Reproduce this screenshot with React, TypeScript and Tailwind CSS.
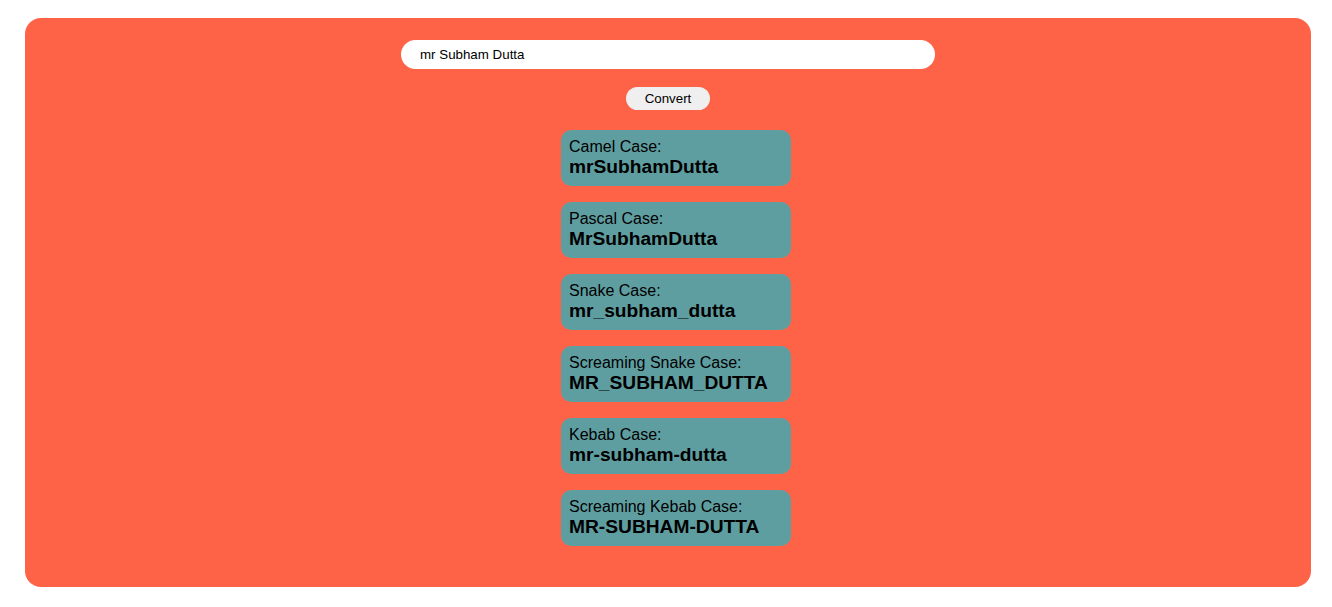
import { useState } from "react";

const words = (s: string) => s.trim().split(/\s+/).filter(Boolean);
const cap = (w: string) => w.charAt(0).toUpperCase() + w.slice(1).toLowerCase();

function convert(input: string) {
  const w = words(input);
  const lower = w.map((x) => x.toLowerCase());
  return [
    { label: "Camel Case:", value: lower[0] + w.slice(1).map(cap).join("") },
    { label: "Pascal Case:", value: w.map(cap).join("") },
    { label: "Snake Case:", value: lower.join("_") },
    { label: "Screaming Snake Case:", value: lower.join("_").toUpperCase() },
    { label: "Kebab Case:", value: lower.join("-") },
    { label: "Screaming Kebab Case:", value: lower.join("-").toUpperCase() },
  ];
}

export default function App() {
  const [text, setText] = useState("mr Subham Dutta");
  const [results, setResults] = useState(convert("mr Subham Dutta"));

  return (
    <div className="min-h-[607px] bg-white pt-[18px] pl-[25px] pr-[21px] font-['Liberation_Sans',Arial,sans-serif]">
      <div className="flex h-[569px] flex-col items-center rounded-[16px] bg-[#ff6347] pt-[22px]">
        <input
          value={text}
          onChange={(e) => setText(e.target.value)}
          className="h-[29px] w-[534px] rounded-full bg-white px-[19px] text-[13.333px] text-black outline-none"
        />
        <button
          onClick={() => setResults(convert(text))}
          className="mt-[18px] h-[23px] w-[84px] rounded-full bg-[#efefef] text-[13.333px] text-black"
        >
          Convert
        </button>
        <div className="mt-[20px] ml-[16px] flex flex-col gap-[16px]">
          {results.map((r) => (
            <Result key={r.label} label={r.label} value={r.value} />
          ))}
        </div>
      </div>
    </div>
  );
}

function Result({ label, value }: { label: string; value: string }) {
  return (
    <div className="h-[56px] w-[230px] rounded-[10px] bg-[#5f9ea0] px-[8px] pt-[8px] text-black">
      <p className="text-[16px] leading-[18px]">{label}</p>
      <p className="text-[19.2px] leading-[22px] font-bold">{value}</p>
    </div>
  );
}
